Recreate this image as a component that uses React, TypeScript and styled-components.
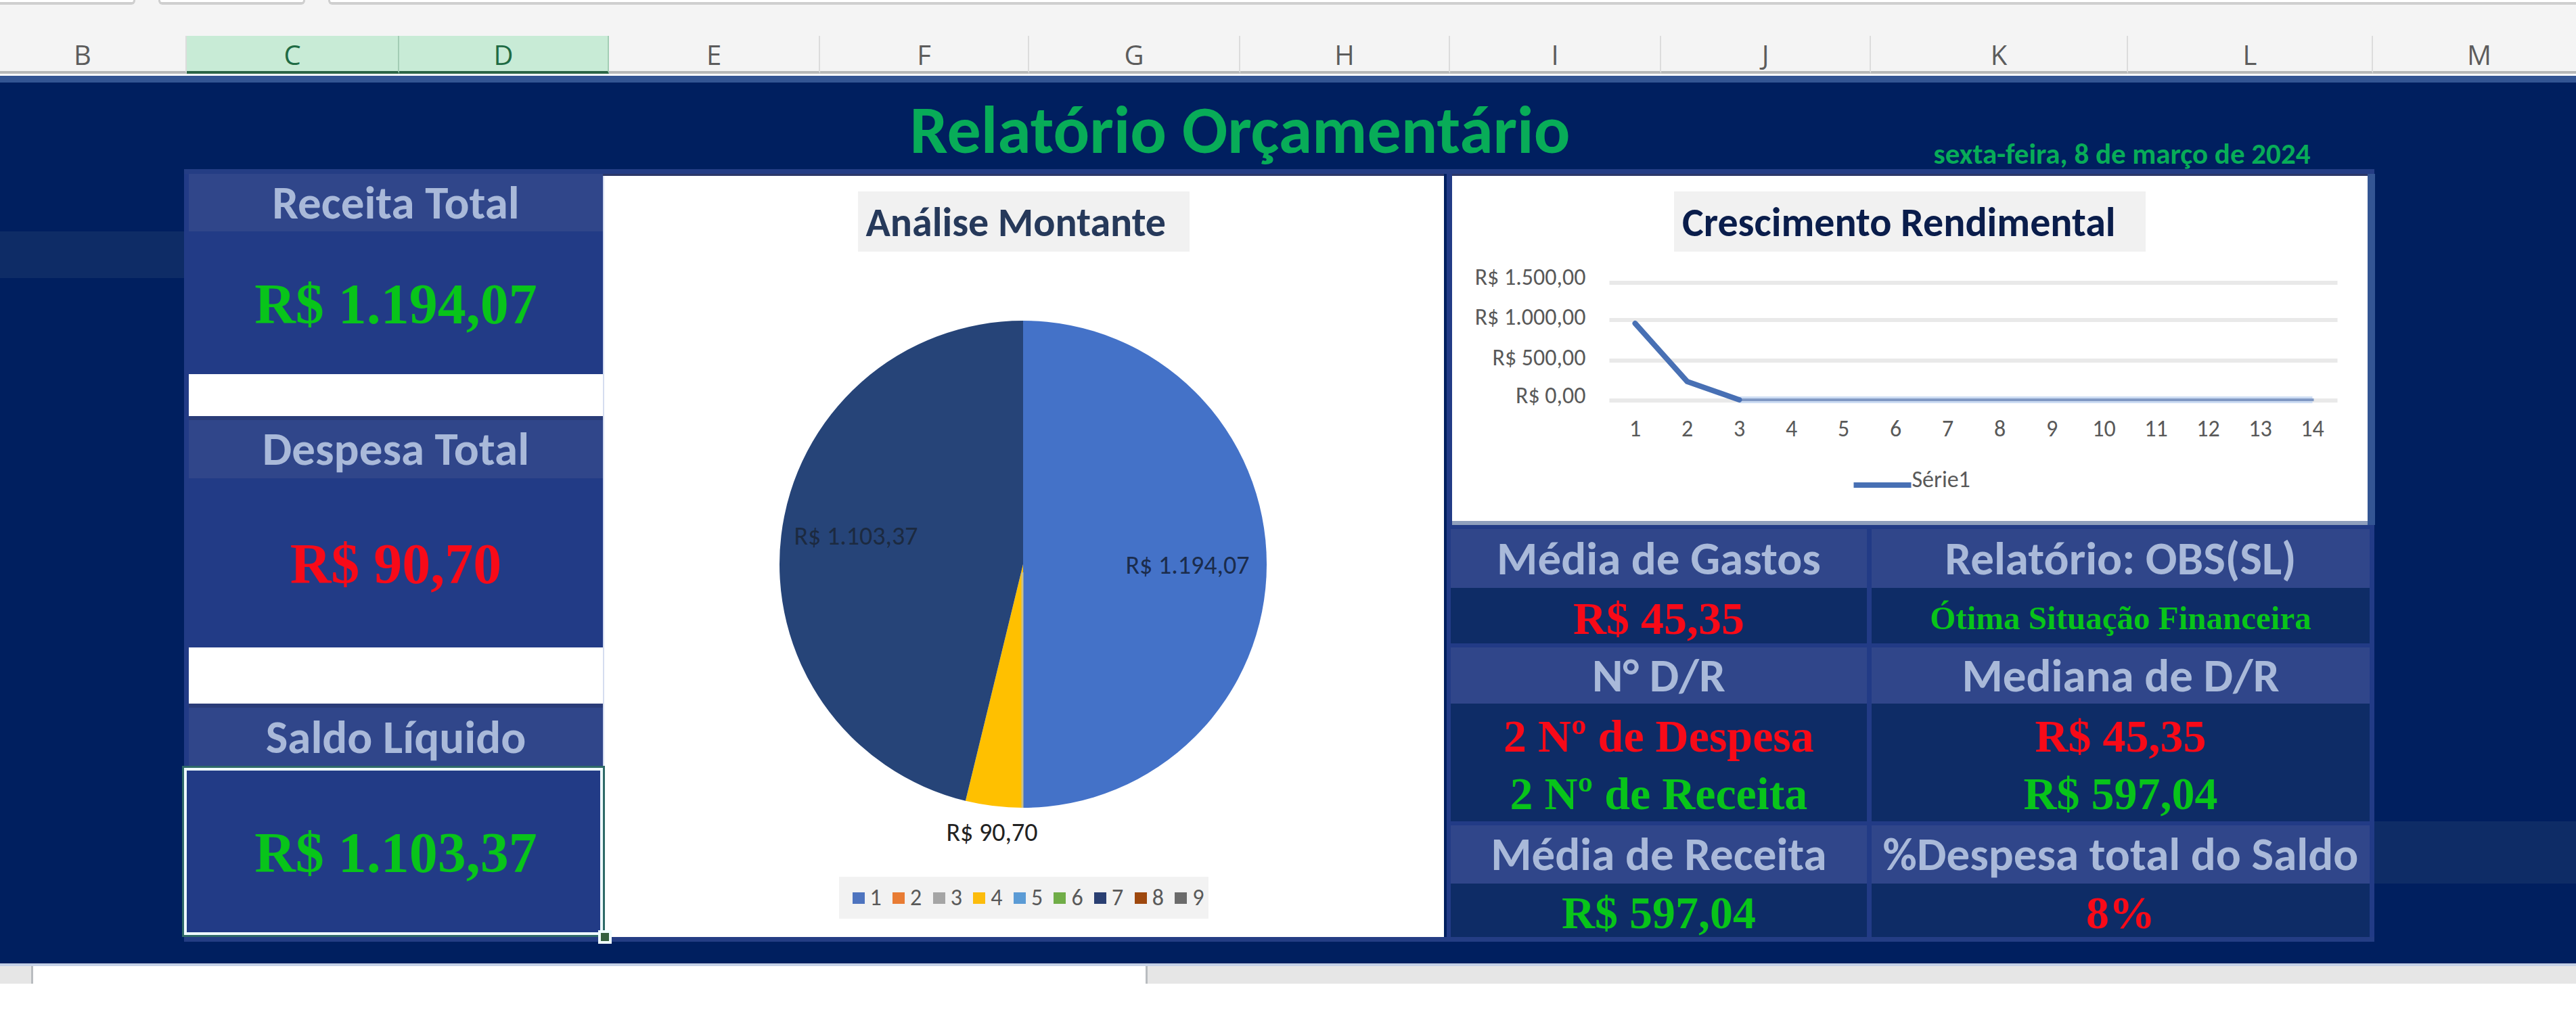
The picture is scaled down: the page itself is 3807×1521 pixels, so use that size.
import React from "react";
import styled, { createGlobalStyle } from "styled-components";

const SANS = `Carlito, Calibri, Lato, "Open Sans", sans-serif`;
const SERIF = `"Liberation Serif", "DejaVu Serif", serif`;

const color = {
  navy: "#001f5f",
  band: "#0e2c66",
  head: "#30468a",
  cell: "#223b86",
  line: "#243d84",
  steel: "#335593",
  label: "#a9b9d9",
  green: "#08c41a",
  red: "#f80a18",
  title: "#08ac58",
};

const GlobalStyle = createGlobalStyle`
  * { box-sizing: border-box; }
  body { margin: 0; background: #fff; font-family: ${SANS}; }
  h1, h2, p { margin: 0; }
`;

/* ---------- top of the window ---------- */

const FormulaStrip = styled.div`
  display: grid;
  grid-template-columns: 200fr 217fr 3322fr;
  column-gap: 34px;
  height: 53px;
  background: #f4f4f4;
`;

const FormulaBox = styled.div<{ $left?: boolean; $right?: boolean }>`
  height: 7px;
  background: #fff;
  border: 0 solid #cfcfcf;
  border-bottom-width: 4px;
  border-left-width: ${(p) => (p.$left ? "3px" : 0)};
  border-right-width: ${(p) => (p.$right ? "3px" : 0)};
  border-radius: 0 0 ${(p) => (p.$right ? "6px" : 0)} ${(p) => (p.$left ? "6px" : 0)};
`;

const Headers = styled.div`
  display: grid;
  grid-template-columns: 276fr 314fr 310fr 312fr 309fr 312fr 310fr 312fr 310fr 380fr 362fr 300fr;
  height: 59px;
  background: #f4f4f4;
  border-bottom: 3px solid #fff;
`;

const ColumnHeader = styled.div<{ $selected?: boolean }>`
  display: flex;
  align-items: center;
  justify-content: center;
  min-width: 0;
  padding-top: 4px;
  font: 400 40px/48px "Open Sans", "Noto Sans", sans-serif;
  color: ${(p) => (p.$selected ? "#1f6b44" : "#5c5c5c")};
  background: ${(p) => (p.$selected ? "#c8ebd6" : "transparent")};
  border-right: 2px solid ${(p) => (p.$selected ? "#a3cdb5" : "#dcdcdc")};
  border-bottom: 4px solid ${(p) => (p.$selected ? "#2c6647" : "#b6b8b8")};

  &:first-child { padding-right: 30px; }
  &:last-child { padding-left: 14px; border-right: 0; }
`;

/* ---------- sheet ---------- */

const Sheet = styled.main`
  background: ${color.navy};
  border-top: 10px solid ${color.steel};
`;

const TitleRow = styled.header`
  display: grid;
  grid-template-columns: 900fr 1865fr 742fr 300fr;
  grid-template-rows: 128px;
  text-align: center;
  color: ${color.title};
  white-space: nowrap;
`;

const Title = styled.h1`
  grid-column: 2;
  font-size: 100px;
  line-height: 140px;
`;

const DateText = styled.p`
  grid-column: 3;
  align-self: end;
  font-size: 43px;
  line-height: 44px;
  font-weight: 700;
`;

const SheetBody = styled.div`
  display: grid;
  grid-template-columns: 272fr 3237fr 298fr;
  padding-bottom: 32px;
`;

const Gutter = styled.div<{ $top: number }>`
  padding-top: ${(p) => p.$top}px;
`;

const Band = styled.div<{ $height: number }>`
  height: ${(p) => p.$height}px;
  background: ${color.band};
`;

const Board = styled.div`
  display: grid;
  grid-template-columns: 619fr 1247fr 1371fr;
  background: ${color.cell};
  border-top: 7px solid ${color.line};
  border-bottom: 7px solid ${color.line};
`;

const Summary = styled.div`
  display: flex;
  flex-direction: column;
  padding-left: 7px;
`;

const SummaryHead = styled.h2<{ $height: number; $ruled?: boolean }>`
  height: ${(p) => p.$height}px;
  border-top: ${(p) => (p.$ruled ? "6px" : 0)} solid #2a3c78;
  display: flex;
  align-items: center;
  justify-content: center;
  background: ${color.head};
  color: ${color.label};
  font-size: 69px;
  line-height: 80px;
`;

const Spacer = styled.div<{ $height: number }>`
  height: ${(p) => p.$height}px;
  background: #fff;
`;

const SummaryValue = styled.div<{ $height: number; $tone: "green" | "red" }>`
  position: relative;
  height: ${(p) => p.$height}px;
  padding-top: 4px;
  display: flex;
  align-items: center;
  justify-content: center;
  color: ${(p) => color[p.$tone]};
  font: 700 84px/96px ${SERIF};
`;

const Selection = styled.span`
  position: absolute;
  z-index: 1;
  inset: 2px 0 3px -7px;
  border: 4px solid #effcff;
  outline: 3px solid #2f6a68;
`;

const FillHandle = styled.span`
  position: absolute;
  z-index: 2;
  right: -13px;
  bottom: -10px;
  width: 20px;
  height: 20px;
  background: #34603f;
  border: 4px solid #effcff;
`;

/* ---------- charts ---------- */

const PieColumn = styled.div`
  display: flex;
  flex-direction: column;
  padding-right: 4px;
  background: ${color.navy};
`;

const PiePanel = styled.figure`
  flex: 1;
  display: flex;
  flex-direction: column;
  align-items: center;
  margin: 0;
  padding-top: 23px;
  border-top: 3px solid #2c3868;
  box-shadow: inset 2px 0 0 #d5ddf0;
  background: #fff;
`;

const ChartTitle = styled.figcaption<{ $width: string; $ink: string }>`
  width: ${(p) => p.$width};
  height: 89px;
  padding-left: 12px;
  background: #f1f1f1;
  color: ${(p) => p.$ink};
  font-size: 60px;
  line-height: 92px;
  font-weight: 700;
  white-space: nowrap;
`;

const PieDrawing = styled.svg`
  width: 100%;
  height: 924px;
`;

const PieLabel = styled.text`
  font: 400 38px ${SANS};
  text-anchor: middle;
`;

const Legend = styled.ul`
  display: flex;
  justify-content: space-between;
  align-items: center;
  width: 546px;
  height: 62px;
  margin: 0;
  padding: 0 6px 0 20px;
  list-style: none;
  background: #f2f2f2;
`;

const LegendItem = styled.li<{ $swatch: string }>`
  display: flex;
  align-items: center;
  gap: 8px;
  color: #595959;
  font-size: 34px;
  line-height: 40px;

  &::before {
    content: "";
    width: 18px;
    height: 17px;
    background: ${(p) => p.$swatch};
  }
`;

const RightColumn = styled.div`
  display: flex;
  flex-direction: column;
`;

const LinePanel = styled.figure`
  display: flex;
  flex-direction: column;
  align-items: center;
  margin: 0 10px 0 8px;
  padding-top: 23px;
  border-top: 3px solid #2c3868;
  border-bottom: 6px solid #8f9fbd;
  background: #fff;
  box-shadow: 11px 0 0 ${color.steel};
  clip-path: inset(0 -11px 0 0);
`;

const LineDrawing = styled.svg`
  width: 100%;
  height: 398px;
`;

const AxisText = styled.text`
  font: 400 34px ${SANS};
  fill: #595959;
`;

/* ---------- statistics ---------- */

const Stats = styled.table`
  width: 100%;
  table-layout: fixed;
  border-collapse: separate;
  border-spacing: 0;
  text-align: center;
  white-space: nowrap;

  th, td {
    padding: 0;
    border: 0 solid ${color.cell};
    border-right-width: 7px;
  }
  td { padding-top: 7px; }
  th:first-child, td:first-child {
    width: 45.8%;
    border-left-width: 6px;
  }
`;

const StatHead = styled.th<{ $height: number }>`
  height: ${(p) => p.$height}px;
  background: ${color.head};
  color: ${color.label};
  font-size: 69px;
  line-height: 80px;

  && { border-top-width: 6px; }
`;

const StatCell = styled.td<{ $height: number }>`
  height: ${(p) => p.$height}px;
  background: ${color.band};
  font: 700 68px/72px ${SERIF};
`;

const Stat = styled.p<{ $tone: "green" | "red"; $small?: boolean }>`
  color: ${(p) => color[p.$tone]};
  font-size: ${(p) => (p.$small ? 49 : 68)}px;

  & + & { padding-top: 13px; }
`;

/* ---------- bottom strip ---------- */

const TabStrip = styled.footer`
  display: grid;
  grid-template-columns: 46fr 1650fr 2111fr;
  height: 30px;
  background: #e6e6e6;
  border-top: 4px solid #c4d0e6;
`;

const ActiveTab = styled.div`
  grid-column: 2;
  background: #fff;
  border: 0 solid #b9bcc0;
  border-width: 0 3px;
`;

const columns = ["B", "C", "D", "E", "F", "G", "H", "I", "J", "K", "L", "M"];
const legend = ["#4e74bf", "#e87c34", "#a5a5a5", "#fcbc0c", "#5b9bd5", "#70ad47", "#2a3f72", "#9e480e", "#6b6b6b"];

const slices = [
  { value: 1194.07, fill: "#4472c8" },
  { value: 90.7, fill: "#ffc000" },
  { value: 1103.37, fill: "#264478" },
];
const pie = { cx: 621, cy: 462, r: 360 };

function slicePaths() {
  const total = slices.reduce((sum, s) => sum + s.value, 0);
  let turned = 0;
  return slices.map((s) => {
    const from = (turned / total) * Math.PI * 2;
    turned += s.value;
    const to = (turned / total) * Math.PI * 2;
    const at = (a: number) => `${pie.cx + pie.r * Math.sin(a)} ${pie.cy - pie.r * Math.cos(a)}`;
    return { fill: s.fill, d: `M${pie.cx} ${pie.cy}L${at(from)}A${pie.r} ${pie.r} 0 0 1 ${at(to)}Z` };
  });
}

const gridLines = [
  { y: 43, label: "R$ 1.500,00", base: 49 },
  { y: 98, label: "R$ 1.000,00", base: 108 },
  { y: 158, label: "R$ 500,00", base: 168 },
  { y: 217, label: "R$ 0,00", base: 224 },
];
const pointX = (n: number) => 270 + (n - 1) * 77;

function PieChart() {
  return (
    <PiePanel>
      <ChartTitle $width="490px" $ink="#26395a">Análise Montante</ChartTitle>
      <PieDrawing viewBox="0 0 1243 924" role="img" aria-label="Análise Montante">
        {slicePaths().map((s) => (
          <path key={s.fill} d={s.d} fill={s.fill} />
        ))}
        <path d={`M${pie.cx - 1} ${pie.cy + 12}V${pie.cy + pie.r}`} stroke="#c9c08a" strokeWidth="3" />
        <PieLabel x="864" y="476" fill="#1b2c4c">R$ 1.194,07</PieLabel>
        <PieLabel x="374" y="433" fill="#1c2a40">R$ 1.103,37</PieLabel>
        <PieLabel x="575" y="871" fill="#222">R$ 90,70</PieLabel>
      </PieDrawing>
      <Legend>
        {legend.map((c, i) => (
          <LegendItem key={c} $swatch={c}>{i + 1}</LegendItem>
        ))}
      </Legend>
    </PiePanel>
  );
}

function LineChart() {
  return (
    <LinePanel>
      <ChartTitle $width="697px" $ink="#0a1d4b">Crescimento Rendimental</ChartTitle>
      <LineDrawing viewBox="0 0 1352 398" role="img" aria-label="Crescimento Rendimental">
        {gridLines.map((g) => (
          <g key={g.label}>
            <rect x="232" y={g.y} width="1076" height="6" fill="#e9e9e9" />
            <AxisText x="197" y={g.base} textAnchor="end">{g.label}</AxisText>
          </g>
        ))}
        <rect x={pointX(3)} y="214" width={pointX(14) - pointX(3)} height="10" fill="#cddcf3" />
        <rect x={pointX(3) - 6} y="217" width={pointX(14) - pointX(3) + 8} height="4" fill="#8199c4" />
        <path d={`M${pointX(1)} 106L${pointX(2)} 192L${pointX(3)} 219`} fill="none" stroke="#4870b4" strokeWidth="8" strokeLinecap="round" strokeLinejoin="round" />
        {Array.from({ length: 14 }, (_, i) => (
          <AxisText key={i} x={pointX(i + 1)} y="273" textAnchor="middle">{i + 1}</AxisText>
        ))}
        <path d="M593 345H678" stroke="#4870b4" strokeWidth="8" />
        <AxisText x="679" y="348">Série1</AxisText>
      </LineDrawing>
    </LinePanel>
  );
}

export default function App() {
  return (
    <>
      <GlobalStyle />
      <FormulaStrip>
        <FormulaBox $right />
        <FormulaBox $left $right />
        <FormulaBox $left />
      </FormulaStrip>
      <Headers>
        {columns.map((c) => (
          <ColumnHeader key={c} $selected={c === "C" || c === "D"}>{c}</ColumnHeader>
        ))}
      </Headers>
      <Sheet>
        <TitleRow>
          <Title>Relatório Orçamentário</Title>
          <DateText>sexta-feira, 8 de março de 2024</DateText>
        </TitleRow>
        <SheetBody>
          <Gutter $top={92}><Band $height={69} /></Gutter>
          <Board>
            <Summary>
              <SummaryHead $height={85}>Receita Total</SummaryHead>
              <SummaryValue $height={211} $tone="green">R$ 1.194,07</SummaryValue>
              <Spacer $height={62} />
              <SummaryHead $height={92} $ruled>Despesa Total</SummaryHead>
              <SummaryValue $height={250} $tone="red">R$ 90,70</SummaryValue>
              <Spacer $height={83} />
              <SummaryHead $height={93} $ruled>Saldo Líquido</SummaryHead>
              <SummaryValue $height={252} $tone="green">
                R$ 1.103,37
                <Selection />
                <FillHandle />
              </SummaryValue>
            </Summary>
            <PieColumn><PieChart /></PieColumn>
            <RightColumn>
              <LineChart />
              <Stats>
                <tbody>
                  <tr>
                    <StatHead $height={93}>Média de Gastos</StatHead>
                    <StatHead $height={93}>Relatório: OBS(SL)</StatHead>
                  </tr>
                  <tr>
                    <StatCell $height={82}><Stat $tone="red">R$ 45,35</Stat></StatCell>
                    <StatCell $height={82}><Stat $tone="green" $small>Ótima Situação Financeira</Stat></StatCell>
                  </tr>
                  <tr>
                    <StatHead $height={89}>N° D/R</StatHead>
                    <StatHead $height={89}>Mediana de D/R</StatHead>
                  </tr>
                  <tr>
                    <StatCell $height={174}>
                      <Stat $tone="red">2 Nº de Despesa</Stat>
                      <Stat $tone="green">2 Nº de Receita</Stat>
                    </StatCell>
                    <StatCell $height={174}>
                      <Stat $tone="red">R$ 45,35</Stat>
                      <Stat $tone="green">R$ 597,04</Stat>
                    </StatCell>
                  </tr>
                  <tr>
                    <StatHead $height={92}>Média de Receita</StatHead>
                    <StatHead $height={92}>%Despesa total do Saldo</StatHead>
                  </tr>
                  <tr>
                    <StatCell $height={79}><Stat $tone="green">R$ 597,04</Stat></StatCell>
                    <StatCell $height={79}><Stat $tone="red">8%</Stat></StatCell>
                  </tr>
                </tbody>
              </Stats>
            </RightColumn>
          </Board>
          <Gutter $top={964}><Band $height={92} /></Gutter>
        </SheetBody>
      </Sheet>
      <TabStrip><ActiveTab /></TabStrip>
    </>
  );
}
